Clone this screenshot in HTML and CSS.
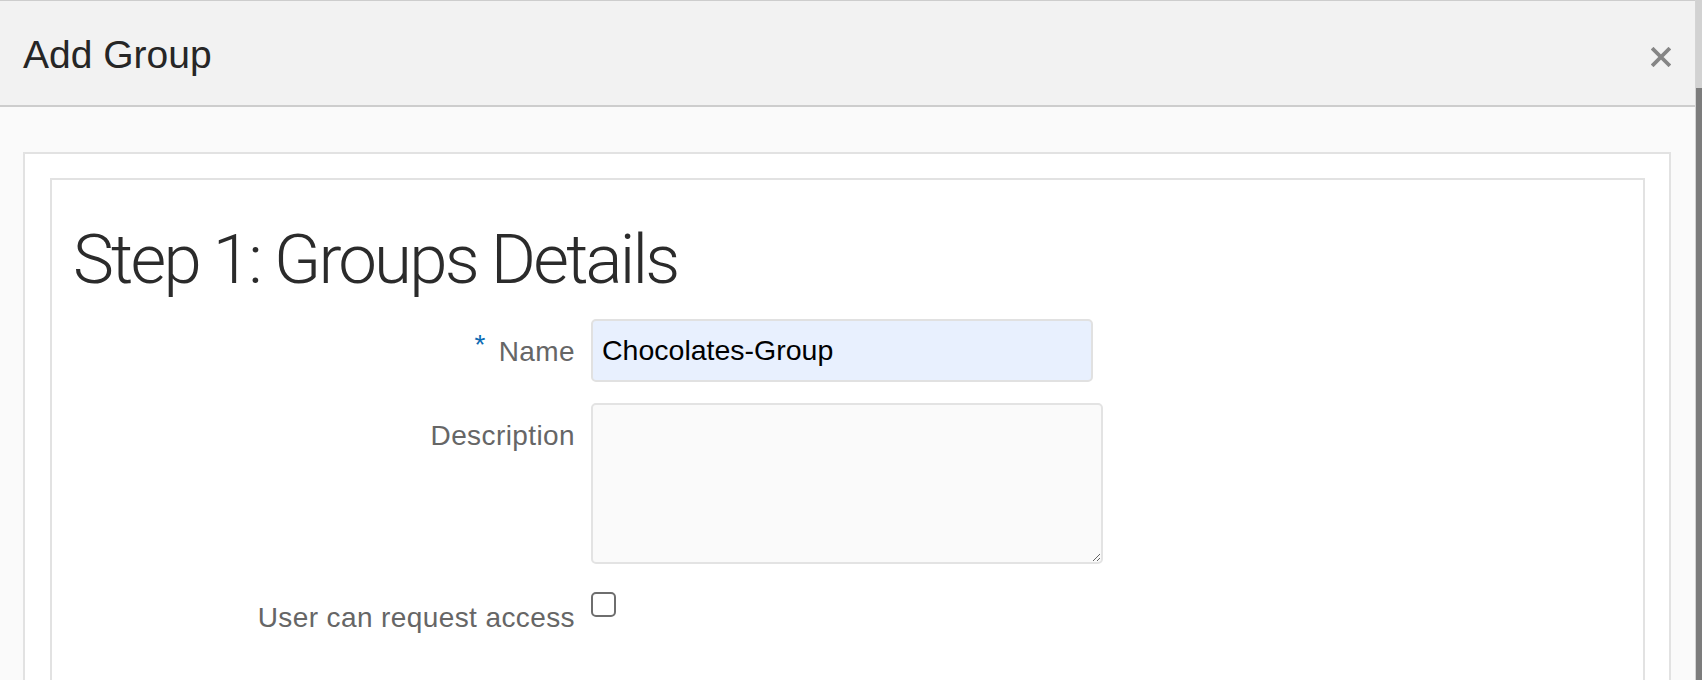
FILE: index.html
```html
<!DOCTYPE html>
<html lang="en">
<head>
<meta charset="utf-8">
<title>Add Group</title>
<link rel="stylesheet" href="styles.css">
</head>
<body>
<div class="dialog">
  <div class="dialog-header">
    <h1 class="dialog-title">Add Group</h1>
    <button class="close-btn" aria-label="Close">
      <svg width="20" height="20" viewBox="0 0 20 20"><path d="M2.5 2.5 L17.5 17.5 M17.5 2.5 L2.5 17.5" stroke="#868686" stroke-width="3.8" stroke-linecap="square" fill="none"/></svg>
    </button>
  </div>
  <div class="dialog-body">
    <div class="outer-panel">
      <div class="inner-panel">
        <h2 class="step-title">Step 1: Groups Details</h2>
        <form class="form-grid">
          <label class="field-label" for="name"><span class="req">*</span>Name</label>
          <div class="field"><input id="name" class="text-input" type="text" value="Chocolates-Group"></div>

          <label class="field-label" for="desc">Description</label>
          <div class="field"><textarea id="desc" class="text-area"></textarea></div>

          <label class="field-label check-label" for="req">User can request access</label>
          <div class="field check-field"><input id="req" class="checkbox" type="checkbox"></div>
        </form>
      </div>
    </div>
  </div>
</div>
</body>
</html>
```

FILE: styles.css
```css
* { box-sizing: border-box; }

html, body {
  margin: 0;
  padding: 0;
  height: 680px;
  overflow: hidden;
}

body {
  background: linear-gradient(to bottom, #d2d2d2 0, #d2d2d2 88px, #7c7c7c 88px, #7c7c7c 100%);
  font-family: "Liberation Sans", Arial, sans-serif;
}

.dialog {
  width: 1696px;
  height: 680px;
  border-right: 1px solid #d4d4d4;
  background: #fafafa;
  overflow: hidden;
}

.dialog-header {
  display: flex;
  justify-content: space-between;
  align-items: flex-start;
  background: #f2f2f2;
  border-top: 1px solid #cdcdcd;
  border-bottom: 2px solid #cdcdcd;
  padding: 34px 24px 31px 23px;
}

.dialog-title {
  margin: 0;
  font-size: 39px;
  line-height: 39px;
  font-weight: 400;
  color: #262626;
}

.close-btn {
  margin: 12px 0 0 0;
  padding: 0;
  border: 0;
  background: transparent;
  width: 20px;
  height: 20px;
  display: block;
}

.close-btn svg { display: block; }

.dialog-body {
  padding: 45px 24px 0 23px;
}

.outer-panel {
  background: #ffffff;
  border: 2px solid #e2e2e2;
  padding: 24px 24px 0 25px;
}

.inner-panel {
  background: #ffffff;
  border: 2px solid #e2e2e2;
  padding: 40px 0 300px 0;
}

.step-title {
  margin: 0 0 19px 21px;
  font-family: Roboto, "Liberation Sans", sans-serif;
  font-weight: 300;
  font-size: 69px;
  line-height: 80px;
  letter-spacing: -2.8px;
  color: #2b2b2b;
}

.form-grid {
  display: grid;
  grid-template-columns: 523px auto;
  column-gap: 16px;
  row-gap: 21px;
  margin: 0;
}

.field-label {
  text-align: right;
  font-size: 28px;
  line-height: 32px;
  letter-spacing: 0.4px;
  color: #666666;
  padding-top: 17px;
}

.req {
  color: #0b6ab3;
  font-size: 28px;
  line-height: 0;
  vertical-align: 7px;
  margin-right: 13px;
}

.field { display: flex; align-items: flex-start; }

.text-input {
  width: 502px;
  height: 63px;
  margin: 0;
  padding: 0 9px;
  border: 2px solid #e1e1e1;
  border-radius: 5px;
  background: #e8f0fe;
  font-family: "Liberation Sans", Arial, sans-serif;
  font-size: 28.5px;
  color: #000000;
  outline: none;
}

.text-area {
  width: 512px;
  height: 161px;
  margin: 0;
  padding: 9px;
  border: 2px solid #e3e3e3;
  border-radius: 5px;
  background: #fafafa;
  font-family: "Liberation Sans", Arial, sans-serif;
  font-size: 28px;
  resize: both;
  outline: none;
}

.check-label {
  margin-top: 7px;
  padding-top: 10px;
}

.check-field { margin-top: 7px; }

.checkbox {
  appearance: none;
  -webkit-appearance: none;
  width: 25px;
  height: 25px;
  margin: 0;
  border: 2px solid #6e6e6e;
  border-radius: 5px;
  background: #ffffff;
}
```
